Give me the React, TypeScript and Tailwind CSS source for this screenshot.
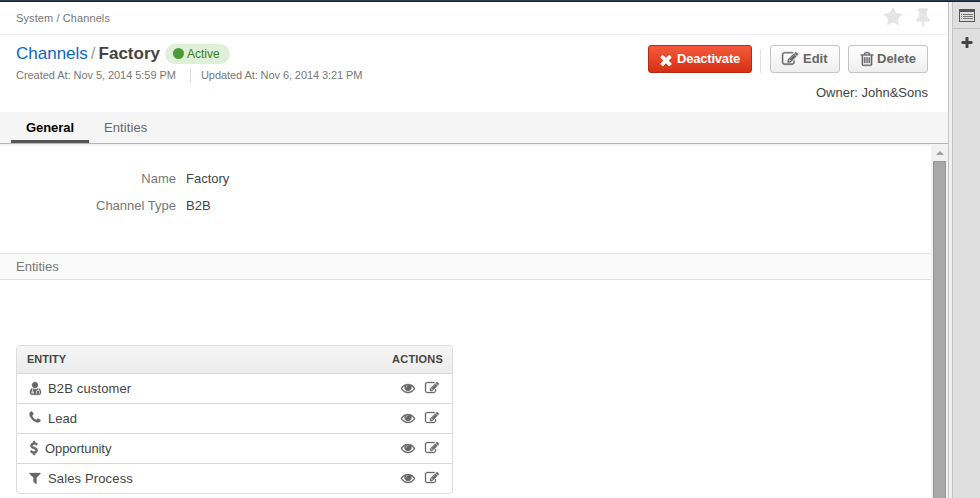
import React from "react";

const paths = {
  eye: "M1664 960q-152-236-381-353 61 104 61 225 0 185-131.5 316.5t-316.5 131.5-316.5-131.5-131.5-316.5q0-121 61-225-229 117-381 353 133 205 333.5 326.5t434.5 121.5 434.5-121.5 333.5-326.5zm-720-384q0-20-14-34t-34-14q-125 0-214.5 89.5t-89.5 214.5q0 20 14 34t34 14 34-14 14-34q0-86 61-147t147-61q20 0 34-14t14-34zm848 384q0 34-20 69-140 230-376.5 368.5t-499.5 138.5-499.5-139-376.5-368q-20-35-20-69t20-69q140-229 376.5-368t499.5-139 499.5 139 376.5 368q20 35 20 69z",
  edit: "M888 1184l116-116-152-152-116 116v56h96v96h56zm440-720q-16-16-33 1l-350 350q-17 17-1 33t33-1l350-350q17-17 1-33zm80 594v190q0 119-84.5 203.5t-203.5 84.5h-832q-119 0-203.5-84.5t-84.5-203.5v-832q0-119 84.5-203.5t203.5-84.5h832q63 0 117 25 15 7 18 23 3 17-9 29l-49 49q-14 14-32 8-23-6-45-6h-832q-66 0-113 47t-47 113v832q0 66 47 113t113 47h832q66 0 113-47t47-113v-126q0-13 9-22l64-64q15-15 35-7t20 29zm-96-738l288 288-672 672h-288v-288zm444 132l-92 92-288-288 92-92q28-28 68-28t68 28l152 152q28 28 28 68t-28 68z",
  trash: "M704 736v576q0 14-9 23t-23 9h-64q-14 0-23-9t-9-23v-576q0-14 9-23t23-9h64q14 0 23 9t9 23zm256 0v576q0 14-9 23t-23 9h-64q-14 0-23-9t-9-23v-576q0-14 9-23t23-9h64q14 0 23 9t9 23zm256 0v576q0 14-9 23t-23 9h-64q-14 0-23-9t-9-23v-576q0-14 9-23t23-9h64q14 0 23 9t9 23zm128 724v-948h-896v948q0 22 7 40.5t14.5 27 10.5 8.5h832q3 0 10.5-8.5t14.5-27 7-40.5zm-672-1076h448l-48-117q-7-9-17-11h-317q-10 2-17 11zm928 32v64q0 14-9 23t-23 9h-96v948q0 83-47 143.5t-113 60.5h-832q-66 0-113-58.5t-47-141.5v-952h-96q-14 0-23-9t-9-23v-64q0-14 9-23t23-9h309l70-167q15-37 54-63t79-26h320q40 0 79 26t54 63l70 167h309q14 0 23 9t9 23z",
  times: "M1490 1322q0 40-28 68l-136 136q-28 28-68 28t-68-28l-294-294-294 294q-28 28-68 28t-68-28l-136-136q-28-28-28-68t28-68l294-294-294-294q-28-28-28-68t28-68l136-136q28-28 68-28t68 28l294 294 294-294q28-28 68-28t68 28l136 136q28 28 28 68t-28 68l-294 294 294 294q28 28 28 68z",
  plus: "M1600 736v192q0 40-28 68t-68 28h-416v416q0 40-28 68t-68 28h-192q-40 0-68-28t-28-68v-416h-416q-40 0-68-28t-28-68v-192q0-40 28-68t68-28h416v-416q0-40 28-68t68-28h192q40 0 68 28t28 68v416h416q40 0 68 28t28 68z",
  phone: "M1600 1240q0 27-10 70.5t-21 68.5q-21 50-122 106-94 51-186 51-27 0-52.5-3.5t-57.5-12.5-47.5-14.5-55.5-20.5-49-18q-98-35-175-83-128-79-264.5-215.5t-215.5-264.5q-48-77-83-175-3-9-18-49t-20.5-55.5-14.5-47.5-12.5-57.5-3.5-52.5q0-92 51-186 56-101 106-122 25-11 68.5-21t70.5-10q14 0 21 3 18 6 53 76 11 19 30 54t35 63.5 31 53.5q3 4 17.5 25t21.5 35.5 7 28.5q0 20-28.5 50t-62 55-62 53-28.5 46q0 9 5 22.5t8.5 20.5 14 24 11.5 19q76 137 174 235t235 174q2 1 19 11.5t24 14 20.5 8.5 22.5 5q18 0 46-28.5t53-62 55-62 50-28.5q14 0 28.5 7t35.5 21.5 25 17.5q25 15 53.5 31t63.5 35 54 30q70 35 76 53 3 7 3 21z",
  filter: "M1595 295q17 41-14 70l-493 493v742q0 42-39 59-13 5-25 5-27 0-45-19l-256-256q-19-19-19-45v-486l-493-493q-31-29-14-70 17-39 59-39h1280q42 0 59 39z",
  star: "M1728 647q0 22-26 48l-363 354 86 500q1 7 1 20 0 21-10.5 35.5t-30.5 14.5q-19 0-40-12l-449-236-449 236q-22 12-40 12-21 0-31.5-14.5t-10.5-35.5q0-6 2-20l86-500-364-354q-25-27-25-48 0-37 56-46l502-73 225-455q19-41 49-41t49 41l225 455 502 73q56 9 56 46z",
  pin: "M800 864v-448q0-14-9-23t-23-9-23 9-9 23v448q0 14 9 23t23 9 23-9 9-23zm672 352q0 26-19 45t-45 19h-429l-51 483q-2 12-10.5 20.5t-20.5 8.5h-1q-27 0-32-27l-76-485h-404q-26 0-45-19t-19-45q0-123 78.5-221.5t177.5-98.5v-512q-52 0-90-38t-38-90 38-90 90-38h640q52 0 90 38t38 90-38 90-90 38v512q99 0 177.5 98.5t78.5 221.5z",
  dollar: "M1362 1185q0 153-99.5 263.5t-258.5 136.5v175q0 14-9 23t-23 9h-135q-13 0-22.5-9.5t-9.5-22.5v-175q-66-9-127.5-31t-101.5-44.5-74-48-46.5-37.5-17.5-18q-17-21-2-41l103-135q7-10 23-12 15-2 24 9l2 2q113 99 243 125 37 8 74 8 81 0 142.5-43t61.5-122q0-28-15-53t-33.5-42-58.5-37.5-66-32-80-32.5q-39-16-61.5-25t-61.5-26.5-62.5-31-56.5-35.5-53.5-42.5-43.5-49-35.5-58-21-66.5-8.5-78q0-138 98-242t255-134v-180q0-13 9.5-22.5t22.5-9.5h135q14 0 23 9t9 23v176q57 6 110.5 23t87 33.5 63.5 37.5 39 29 15 14q17 18 5 38l-81 146q-8 15-23 16-14 3-27-7-3-3-14.5-12t-39-26.5-58.5-32-74.5-26-85.5-11.5q-95 0-155 43t-60 111q0 26 8.5 48t29.5 41.5 39.5 33 56 31 60.5 27 70 27.5q53 20 81 31.5t76 35 75.5 42.5 62 50 53 63.5 31.5 76.5 13 94z",
  doctor: "M576 1408q0 26-19 45t-45 19-45-19-19-45 19-45 45-19 45 19 19 45zm1088 101q0 121-73 190t-194 69h-874q-121 0-194-69t-73-190q0-68 5.5-131t24-138 47.5-132.5 81-103 120-60.5q-22 52-22 120v203q-58 20-93 70t-35 111q0 80 56 136t136 56 136-56 56-136q0-61-35.5-111t-92.5-70v-203q0-62 25-93 132 104 295 104t295-104q25 31 25 93v64q-106 0-181 75t-75 181v89q-32 29-32 71 0 40 28 68t68 28 68-28 28-68q0-42-32-71v-89q0-52 38-90t90-38 90 38 38 90v89q-32 29-32 71 0 40 28 68t68 28 68-28 28-68q0-42-32-71v-89q0-68-34.5-127.5t-93.5-93.5q0-10 .5-42.5t0-48-2.5-41.5-7-47-13-40q68 15 120 60.5t81 103 47.5 132.5 24 138 5.5 131zm-384-997q0 159-112.5 271.5t-271.5 112.5-271.5-112.5-112.5-271.5 112.5-271.5 271.5-112.5 271.5 112.5 112.5 271.5z",
};

type IconName = keyof typeof paths;

function Icon({ name, className }: { name: IconName; className: string }) {
  return (
    <svg viewBox="0 0 1792 1792" fill="currentColor" className={`shrink-0 overflow-visible ${className}`}>
      <path d={paths[name]} />
    </svg>
  );
}

const rows: { icon: IconName; label: string; iconClass: string; labelClass: string }[] = [
  { icon: "doctor", label: "B2B customer", iconClass: "ml-[11px] mr-[6px] mb-[2px] h-[14px] w-[14px] stroke-current stroke-[50]", labelClass: "tracking-[0.14px]" },
  { icon: "phone", label: "Lead", iconClass: "ml-[11px] mr-[6px] mb-[2px] h-[15px] w-[14px] stroke-current stroke-[40]", labelClass: "" },
  { icon: "dollar", label: "Opportunity", iconClass: "ml-[10px] mr-[4px] mb-[2px] h-[14px] w-[14px] stroke-current stroke-[80]", labelClass: "tracking-[-0.08px]" },
  { icon: "filter", label: "Sales Process", iconClass: "ml-[11px] mr-[6px] mb-[2px] h-[14px] w-[14px] stroke-current stroke-[40]", labelClass: "tracking-[0.14px]" },
];

const button =
  "flex h-[28px] items-center rounded-[3px] border text-[13px] font-bold leading-[26px]";

export default function App() {
  return (
    <div className="flex h-[498px] w-[980px] flex-col overflow-hidden bg-white font-['Liberation_Sans',Arial,sans-serif] text-[13px] leading-[18px] text-[#444]">
      <div className="h-[2px] shrink-0 border-b border-[#1b2230] bg-[#2b3a4b]" />
      <div className="flex min-h-0 flex-1">
        <main className="flex w-[949px] shrink-0 flex-col border-r border-[#c4c4c4]">
          <div className="flex h-[33px] shrink-0 items-center justify-between border-b border-[#f0f0f0] pl-4 pr-[15px] text-[11px] text-[#777]">
            <span className="tracking-[0.1px]">System / Channels</span>
            <span className="mb-[2px] flex items-center text-[#e4e4e4]">
              <Icon name="star" className="mr-[10px] h-5 w-5" />
              <Icon name="pin" className="h-5 w-5 stroke-current stroke-[50]" />
            </span>
          </div>
          <header className="flex h-[77px] shrink-0 justify-between pl-4 pr-5">
            <div className="pt-[8px]">
              <h1 className="flex h-[21px] items-center text-[17px]">
                <a className="text-[#0c66c6]">Channels</a>
                <span className="ml-[3px] mr-[3px] text-[#999]">/</span>
                <b>Factory</b>
                <span className="ml-[5px] flex h-5 w-[65px] items-center rounded-full bg-[#dff0d8] pl-2 text-[12px] text-[#3c7c1c]">
                  <i className="mr-[3px] h-[11px] w-[11px] rounded-full bg-[#4a9c36]" />
                  Active
                </span>
              </h1>
              <div className="mt-[2px] flex h-[18px] items-center text-[11px] tracking-[-0.05px] text-[#777]">
                <span className="w-[160px] whitespace-nowrap">Created At: Nov 5, 2014 5:59 PM</span>
                <span className="ml-[14px] h-[14px] w-px bg-[#ddd]" />
                <span className="ml-[10px] tracking-[-0.08px]">Updated At: Nov 6, 2014 3:21 PM</span>
              </div>
            </div>
            <div className="flex flex-col items-end pt-[10px]">
              <div className="flex items-center">
                <button className={`${button} w-[104px] border-[#b52a10] bg-linear-to-b from-[#f5593a] to-[#d62e12] pl-[9px] tracking-[-0.2px] text-white`}>
                  <Icon name="times" className="mr-[3px] mt-[1px] h-4 w-4 stroke-current stroke-[50]" />
                  Deactivate
                </button>
                <span className="ml-[8px] mt-1 h-6 w-px bg-[#e2e2e2]" />
                <button className={`${button} ml-[9px] w-[70px] border-[#c4c4c4] bg-linear-to-b from-white to-[#eee] pl-[11px] text-[#666]`}>
                  <Icon name="edit" className="mr-[5px] h-4 w-4 stroke-current stroke-[40]" />
                  Edit
                </button>
                <button className={`${button} ml-2 w-[80px] border-[#c4c4c4] bg-linear-to-b from-white to-[#eee] pl-[10px] text-[#666]`}>
                  <Icon name="trash" className="mr-[2px] h-4 w-4 stroke-current stroke-[40]" />
                  Delete
                </button>
              </div>
              <div className="mt-[11px]">Owner: John&amp;Sons</div>
            </div>
          </header>
          <nav className="flex h-[32px] shrink-0 border-b border-[#b5b5b5] bg-[#f5f5f5] pl-[11px]">
            <div className="h-[31px] w-[78px] border-b-[3px] border-[#555] text-center font-bold leading-[31px] tracking-[-0.05px] text-black">
              General
            </div>
            <div className="ml-[15px] leading-[31px] tracking-[0.1px] text-[#666]">Entities</div>
          </nav>
          <div className="h-[2px] shrink-0 bg-[#f3f3f3]" />
          <div className="flex min-h-0 flex-1">
            <section className="w-[931px]">
              <dl className="grid h-[107px] grid-cols-[176px_auto] content-start gap-x-[10px] gap-y-[9px] pt-[24px]">
                <dt className="text-right text-[#777]">Name</dt>
                <dd>Factory</dd>
                <dt className="text-right text-[#777]">Channel Type</dt>
                <dd>B2B</dd>
              </dl>
              <h2 className="h-[27px] border-y border-[#e2e2e2] bg-[#fafafa] pl-4 leading-[26px] text-[#777]">
                Entities
              </h2>
              <div className="ml-4 mt-[65px] w-[437px] overflow-hidden rounded-[4px] border border-[#ddd]">
                <div className="flex h-[27px] justify-between bg-linear-to-b from-[#f5f5f5] to-[#ececec] px-[10px] text-[11px] font-bold leading-[27px]">
                  <span>ENTITY</span>
                  <span className="-mr-px tracking-[0.2px]">ACTIONS</span>
                </div>
                {rows.map((row) => (
                  <div key={row.label} className="flex h-[30px] items-center border-t border-[#d8d8d8]">
                    <Icon name={row.icon} className={`${row.iconClass} text-[#666]`} />
                    <span className={`flex-1 ${row.labelClass}`}>{row.label}</span>
                    <Icon name="eye" className="mb-[2px] mr-[10px] h-[14px] w-[14px] stroke-current stroke-[50] text-[#666]" />
                    <Icon name="edit" className="mb-[2px] mr-[13px] h-[14px] w-[14px] stroke-current stroke-[40] text-[#666]" />
                  </div>
                ))}
              </div>
            </section>
            <div className="flex w-[17px] flex-col items-center bg-[#f1f1f1]">
              <div className="flex h-[15px] w-full shrink-0 items-center justify-center pb-[2px]">
                <i className="border-x-4 border-b-4 border-x-transparent border-b-[#a0a0a0]" />
              </div>
              <div className="w-[13px] flex-1 border border-b-0 border-[#969696] bg-[#a8a8a8]" />
            </div>
          </div>
        </main>
        <div className="w-[3px] bg-[#f0f0f0]" />
        <aside className="flex flex-1 flex-col items-center border-l border-[#c4c4c4] bg-[#dfdfdf] text-[#444]">
          <div className="flex h-[27px] w-full items-center justify-center border-b border-[#c0c0c0]">
            <svg className="h-[13px] w-4" viewBox="0 0 16 13" shapeRendering="crispEdges">
              <rect width="16" height="13" rx="1" fill="#555" />
              <path fill="#dfdfdf" d="M1 3h14v9H1z" />
              <path fill="#777" d="M2 5h1v1H2zM4 5h10v1H4zM2 7h1v1H2zM4 7h10v1H4zM2 9h1v1H2zM4 9h10v1H4z" />
            </svg>
          </div>
          <Icon name="plus" className="mt-[7px] h-[14px] w-[14px]" />
        </aside>
      </div>
    </div>
  );
}
